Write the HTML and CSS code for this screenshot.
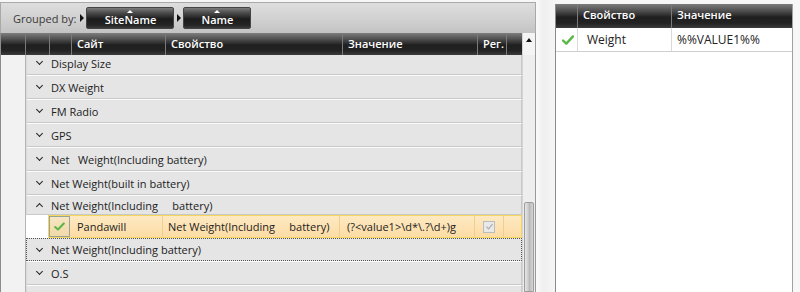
FILE: index.html
```html
<!DOCTYPE html>
<html lang="en">
<head>
  <meta charset="UTF-8">
  <title>Grouped grid</title>
  <link rel="stylesheet" href="styles.css">
</head>
<body>
  <div class="app">
    <div class="left-pane">
      <div class="group-bar">
        <span class="group-label">Grouped by:</span>
        <span class="group-arrow"></span>
        <span class="group-btn site">SiteName</span>
        <span class="group-arrow"></span>
        <span class="group-btn name">Name</span>
      </div>

      <div class="grid">
        <div class="grid-main">
          <div class="grid-header">
            <div class="hcell c-indent"></div>
            <div class="hcell c-indent2"></div>
            <div class="hcell c-check"></div>
            <div class="hcell c-site">Сайт</div>
            <div class="hcell c-prop">Свойство</div>
            <div class="hcell c-value">Значение</div>
            <div class="hcell c-reg">Рег.</div>
            <div class="hcell c-end"></div>
          </div>

          <div class="grid-body">
            <div class="gutter"></div>
            <div class="rows">
              <div class="group-row first"><span class="chev down"></span>Display Size</div>
              <div class="group-row"><span class="chev down"></span>DX Weight</div>
              <div class="group-row"><span class="chev down"></span>FM Radio</div>
              <div class="group-row"><span class="chev down"></span>GPS</div>
              <div class="group-row"><span class="chev down"></span>Net&nbsp;&nbsp;&nbsp;Weight(Including battery)</div>
              <div class="group-row"><span class="chev down"></span>Net Weight(built in battery)</div>
              <div class="group-row open"><span class="chev up"></span>Net Weight(Including&nbsp;&nbsp;&nbsp;&nbsp;&nbsp;battery)</div>

              <div class="data-row">
                <div class="dcell c-check">
                  <svg width="11" height="9" viewBox="0 0 12 10"><path d="M1.2 5.6 L4.3 8.4 L10.8 1.6" fill="none" stroke="#5bb748" stroke-width="2.3" stroke-linecap="round" stroke-linejoin="round"/></svg>
                </div>
                <div class="dcell c-site">Pandawill</div>
                <div class="dcell c-prop">Net Weight(Including&nbsp;&nbsp;&nbsp;&nbsp;&nbsp;battery)</div>
                <div class="dcell c-value">(?&lt;value1&gt;\d*\.?\d+)g</div>
                <div class="dcell c-reg"><span class="reg-box">
                  <svg width="9" height="9" viewBox="0 0 9 9"><path d="M1.5 4.8 L3.6 6.8 L7.5 2" fill="none" stroke="#b0b0b0" stroke-width="1.2"/></svg>
                </span></div>
                <div class="dcell c-end"></div>
              </div>

              <div class="group-row focused"><span class="chev down"></span>Net Weight(Including battery)</div>
              <div class="group-row"><span class="chev down"></span>O.S</div>
              <div class="group-row"></div>
            </div>
          </div>
        </div>

        <div class="scrollbar">
          <div class="sb-up"></div>
          <div class="sb-track"></div>
          <div class="sb-thumb"></div>
        </div>
      </div>
    </div>

    <div class="splitter"></div>

    <div class="right-pane">
      <div class="r-header">
        <div class="hcell r-check"></div>
        <div class="hcell r-prop">Свойство</div>
        <div class="hcell r-value">Значение</div>
      </div>
      <div class="r-row">
        <div class="rcell r-check">
          <svg width="12" height="10" viewBox="0 0 12 10"><path d="M1 5.5 L4.3 8.6 L11 1.4" fill="none" stroke="#5bb748" stroke-width="2.4" stroke-linecap="round" stroke-linejoin="round"/></svg>
        </div>
        <div class="rcell r-prop">Weight</div>
        <div class="rcell r-value">%%VALUE1%%</div>
      </div>
    </div>
  </div>
</body>
</html>
```

FILE: styles.css
```css
body {
  margin: 0;
  padding: 0;
  font-family: "Open Sans", "DejaVu Sans", sans-serif;
  font-size: 11px;
  color: #222;
  background-color: #f7f7f7;
}

.app {
  display: flex;
  height: 292px;
  overflow: hidden;
}

/* left pane */
.left-pane {
  width: 536px;
  display: flex;
  flex-direction: column;
  padding-top: 2px;
  box-sizing: border-box;
}

.group-bar {
  height: 31px;
  display: flex;
  align-items: center;
  box-sizing: border-box;
  border: 1px solid #a9a9a9;
  border-bottom: none;
  background: linear-gradient(to bottom, #dedede 0%, #cfcfcf 60%, #c3c3c3 100%);
  padding-left: 12px;
}

.group-label {
  color: #3a3a3a;
  margin-right: 4px;
}

.group-arrow {
  width: 0;
  height: 0;
  border-top: 4px solid transparent;
  border-bottom: 4px solid transparent;
  border-left: 4px solid #111;
  margin-right: 2px;
}

.group-btn {
  position: relative;
  height: 22px;
  line-height: 23px;
  box-sizing: border-box;
  border: 1px solid #444;
  border-radius: 2px;
  background: linear-gradient(to bottom, #7c7c7c 0%, #4a4a4a 25%, #1c1c1c 55%, #242424 85%, #3a3a3a 100%);
  color: #fff;
  font-weight: 600;
  text-align: center;
  margin-right: 3px;
}

.group-btn::before {
  content: '';
  position: absolute;
  top: 2px;
  left: 50%;
  margin-left: -3px;
  border-left: 3px solid transparent;
  border-right: 3px solid transparent;
  border-bottom: 3px solid #fff;
}

.group-btn.site {
  width: 88px;
}

.group-btn.name {
  width: 68px;
}

.grid {
  flex: 1;
  display: flex;
  border-left: 1px solid #8c8c8c;
  border-right: 1px solid #9a9a9a;
  min-height: 0;
}

.grid-main {
  width: 521px;
  display: flex;
  flex-direction: column;
}

.grid-header {
  display: flex;
  height: 22px;
  flex-shrink: 0;
}

.hcell {
  box-sizing: border-box;
  height: 100%;
  border-right: 1px solid #7a7a7a;
  background: linear-gradient(to bottom, #7d7d7d 0%, #555 25%, #1f1f1f 55%, #232323 80%, #3c3c3c 100%);
  color: #fff;
  font-weight: 600;
  padding-left: 5px;
  line-height: 22px;
  white-space: nowrap;
}

.c-indent { width: 25px; }
.c-indent2 { width: 24px; }
.c-check { width: 22px; }
.c-site { width: 94px; }
.c-prop { width: 177px; }
.c-value { width: 135px; }
.c-reg { width: 29px; }
.c-end { width: 15px; }

.grid-header .c-end {
  border-right: none;
}

.grid-body {
  flex: 1;
  display: flex;
  overflow: hidden;
}

.gutter {
  width: 24px;
  flex-shrink: 0;
  background-color: #f2f2f2;
  border-right: 1px solid #b5b5b5;
}

.rows {
  flex: 1;
  margin-top: -4px;
  background-color: #fff;
}

.group-row {
  height: 24px;
  box-sizing: border-box;
  display: flex;
  align-items: center;
  background-color: #e5e5e5;
  border: 1px solid #c9c9c9;
  border-top-color: #fbfbfb;
  border-left-color: #d9d9d9;
  padding-left: 10px;
  color: #222;
  white-space: nowrap;
}

.group-row.open {
  height: 20px;
}

.group-row.focused {
  border: 1px dotted #555;
  height: 23px;
}

.chev {
  width: 5px;
  height: 5px;
  border-right: 1.5px solid #222;
  border-bottom: 1.5px solid #222;
  margin-right: 9px;
  box-sizing: border-box;
}

.chev.down {
  transform: rotate(45deg);
  margin-top: -3px;
}

.chev.up {
  transform: rotate(-135deg);
  margin-top: 2px;
}

.data-row {
  display: flex;
  height: 23px;
  margin-left: 22px;
  box-sizing: border-box;
  border: 1px solid #f2d65e;
  background: linear-gradient(to bottom, #fde9c2 0%, #fddca5 100%);
}

.dcell {
  box-sizing: border-box;
  height: 100%;
  border-right: 1px solid #f0cf8e;
  padding-left: 5px;
  display: flex;
  align-items: center;
  white-space: nowrap;
  color: #222;
}

.data-row .c-check {
  width: 21px;
  padding-left: 4px;
  border: 1px solid #9aa39a;
  background: linear-gradient(to bottom, #f6e6c3 0%, #f1d9a8 100%);
}

.data-row .c-site {
  width: 93px;
  padding-left: 7px;
}

.data-row .c-value {
  padding-left: 7px;
}

.data-row .c-end {
  flex: 1;
  border-right: none;
}

.reg-box {
  width: 12px;
  height: 12px;
  box-sizing: border-box;
  border: 1px solid #bcbcbc;
  background-color: #e9e9e9;
  display: flex;
  align-items: center;
  justify-content: center;
  margin-left: 3px;
}

/* scrollbar */
.scrollbar {
  width: 13px;
  display: flex;
  flex-direction: column;
  background-color: #ececec;
  border-left: 1px solid #d4d4d4;
}

.sb-up {
  height: 22px;
  position: relative;
  background-color: #f4f4f4;
}

.sb-up::before {
  content: '';
  position: absolute;
  top: 5px;
  left: 3px;
  border-left: 3px solid transparent;
  border-right: 3px solid transparent;
  border-bottom: 4px solid #111;
}

.sb-track {
  height: 147px;
  background-color: #eeeeee;
}

.sb-thumb {
  flex: 1;
  margin: 0 1px;
  border: 1px solid #9c9c9c;
  border-radius: 2px 2px 0 0;
  background: linear-gradient(to right, #e6e6e6 0%, #cfcfcf 35%, #b9b9b9 55%, #d6d6d6 100%);
}

.splitter {
  width: 19px;
  background: linear-gradient(to right, #fafafa 0%, #efefef 40%, #f6f6f6 100%);
}

/* right pane */
.right-pane {
  width: 238px;
  margin-top: 4px;
  box-sizing: border-box;
  border-left: 1px solid #8a8a8a;
  border-right: 1px solid #a0a0a0;
  background-color: #fff;
}

.r-header {
  display: flex;
  height: 24px;
}

.r-check { width: 22px; }
.r-prop { width: 94px; }
.r-value { flex: 1; }

.r-header .r-value {
  border-right: none;
}

.r-row {
  display: flex;
  height: 24px;
  box-sizing: border-box;
  border-bottom: 1px solid #cfcfcf;
}

.rcell {
  box-sizing: border-box;
  border-right: 1px solid #d9d9d9;
  display: flex;
  align-items: center;
  padding-left: 7px;
  font-size: 12px;
  color: #222;
}

.rcell.r-check {
  padding-left: 6px;
}

.rcell.r-prop {
  padding-left: 9px;
}

.rcell.r-value {
  padding-left: 5px;
  border-right: none;
}
```
